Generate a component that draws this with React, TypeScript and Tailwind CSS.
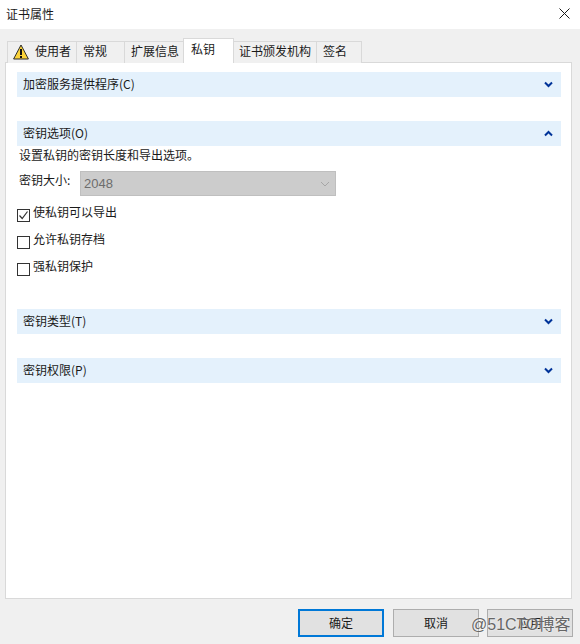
import { ReactNode } from 'react'

const cjk = "font-['Noto_Sans_CJK_SC','Liberation_Sans',sans-serif]"

function Chevron({ up }: { up?: boolean }) {
  return (
    <svg width="9" height="7" viewBox="0 0 9 7" className="block">
      <path
        d={up ? 'M1 5.5 L4.5 2 L8 5.5' : 'M1 1.5 L4.5 5 L8 1.5'}
        fill="none"
        stroke="#003399"
        strokeWidth="2"
      />
    </svg>
  )
}

function Section({ title, up }: { title: string; up?: boolean }) {
  return (
    <div className="h-[25px] bg-[#e4f1fc] flex items-center justify-between pl-[6px] pr-[8px] text-[12px] text-[#1a1a1a]">
      <span className="-mt-[2px]">{title}</span>
      <Chevron up={up} />
    </div>
  )
}

function Tab({ w, active, children }: { w: number; active?: boolean; children: ReactNode }) {
  if (active) {
    return (
      <div className="w-[51px] h-[25px] -ml-px z-10 bg-white border border-b-0 border-[#d9d9d9] pl-[7px] text-[12px] leading-[20px] text-[#1a1a1a]">
        {children}
      </div>
    )
  }
  return (
    <div
      className="h-[22px] border border-b-0 border-[#d9d9d9] -ml-px flex items-center pb-[3px] text-[12px] text-[#1a1a1a] bg-[#f0f0f0]"
      style={{ width: w }}
    >
      {children}
    </div>
  )
}

function Check({ label, checked }: { label: string; checked?: boolean }) {
  return (
    <div className="flex items-center h-[14px] ml-[17px] text-[12px] text-[#1a1a1a]">
      <div className="w-[13px] h-[13px] mt-[2px] border border-[#333333] bg-white flex items-center justify-center shrink-0">
        {checked && (
          <svg width="11" height="11" viewBox="0 0 11 11">
            <path d="M1.5 5.5 L4.2 8.5 L9.5 1.5" fill="none" stroke="#333333" strokeWidth="1.2" />
          </svg>
        )}
      </div>
      <span className="ml-[3px] -mt-[4px]">{label}</span>
    </div>
  )
}

function Btn({ label, primary }: { label: string; primary?: boolean }) {
  return (
    <div
      className={
        primary
          ? 'w-[86px] h-[28px] border-2 border-[#0078d7] bg-[#e1e1e1] flex items-center justify-center pb-[1px] text-[12px] text-[#1a1a1a]'
          : 'w-[86px] h-[28px] border border-[#adadad] bg-[#e1e1e1] flex items-center justify-center pb-[1px] text-[12px] text-[#1a1a1a]'
      }
    >
      {label}
    </div>
  )
}

export default function App() {
  return (
    <div className={`relative w-[580px] h-[644px] overflow-hidden bg-[#f0f0f0] ${cjk}`}>
      <div className="h-[29px] bg-white flex items-center justify-between pl-[6px] pr-[10px] text-[12px] text-[#1a1a1a]">
        <span className="-mt-[1px]">证书属性</span>
        <svg width="11" height="11" viewBox="0 0 11 11" className="-mt-[3px]">
          <path d="M0.5 0.5 L10.5 10.5 M10.5 0.5 L0.5 10.5" stroke="#1a1a1a" strokeWidth="1" />
        </svg>
      </div>

      <div className="h-[34px] flex items-end pl-[8px] relative z-10 -mb-px">
        <Tab w={70}>
          <svg width="16" height="16" viewBox="0 0 16 16" className="ml-[5px] mt-[1px]">
            <path d="M8 1 L15.4 15 L0.6 15 Z" fill="#fbd33a" stroke="#2b2b2b" strokeWidth="1" strokeLinejoin="round" />
            <path d="M8 5 L8 11 M8 12 L8 14" stroke="#111111" strokeWidth="2" />
          </svg>
          <span className="ml-[6px]">使用者</span>
        </Tab>
        <Tab w={49}>
          <span className="ml-[6px]">常规</span>
        </Tab>
        <Tab w={60}>
          <span className="ml-[6px]">扩展信息</span>
        </Tab>
        <Tab w={51} active>
          私钥
        </Tab>
        <Tab w={84}>
          <span className="ml-[5px]">证书颁发机构</span>
        </Tab>
        <Tab w={46}>
          <span className="ml-[6px]">签名</span>
        </Tab>
      </div>

      <div className="ml-[5px] w-[567px] h-[537px] bg-white border border-[#d9d9d9] pt-[9px] pl-[11px] pr-[10px]">
        <Section title="加密服务提供程序(C)" />
        <div className="h-[24px]" />
        <Section title="密钥选项(O)" up />
        <div className="h-[18px] pl-[2px] text-[12px] leading-[18px] text-[#1a1a1a]">设置私钥的密钥长度和导出选项。</div>
        <div className="flex mt-[7px] h-[25px] text-[12px] text-[#1a1a1a]">
          <span className="w-[63px] pl-[2px] leading-[18px]">密钥大小:</span>
          <div className="w-[256px] h-[25px] bg-[#cccccc] border border-[#bfbfbf] flex items-center justify-between pl-[3px] pr-[5px] font-['Liberation_Sans',sans-serif] text-[13px] text-[#6d6d6d]">
            <span>2048</span>
            <svg width="10" height="6" viewBox="0 0 10 6">
              <path d="M1 1 L5 5 L9 1" fill="none" stroke="#a6a6a6" strokeWidth="1" />
            </svg>
          </div>
        </div>
        <div className="flex flex-col gap-[13px] mt-[11px] -ml-[17px]">
          <Check label="使私钥可以导出" checked />
          <Check label="允许私钥存档" />
          <Check label="强私钥保护" />
        </div>
        <div className="h-[34px]" />
        <Section title="密钥类型(T)" />
        <div className="h-[24px]" />
        <Section title="密钥权限(P)" />
      </div>

      <div className="flex justify-end mt-[10px] pr-[7px]">
        <div className="mr-[9px]">
          <Btn label="确定" primary />
        </div>
        <div className="mr-[8px]">
          <Btn label="取消" />
        </div>
        <Btn label="应用" />
      </div>

      <div className="absolute left-[471px] top-[615px] text-[16px] leading-[20px] text-[#666666] font-['Liberation_Sans','Noto_Sans_CJK_SC',sans-serif] [text-shadow:0_0_2px_#ffffff]">
        @51CTO博客
      </div>
    </div>
  )
}
